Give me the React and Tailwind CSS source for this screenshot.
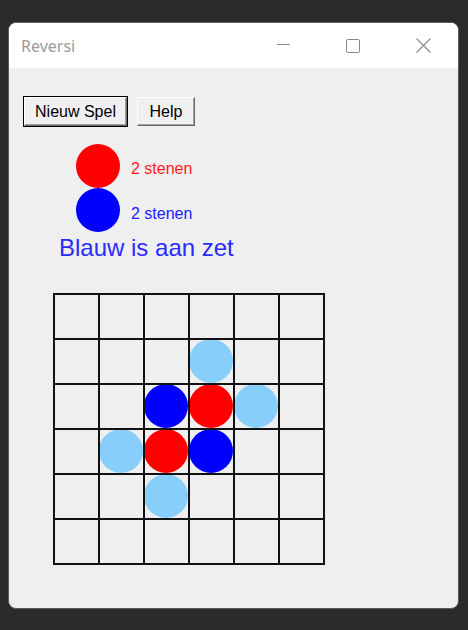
const stones = [
  { r: 1, c: 3, color: '#87cefa' },
  { r: 2, c: 2, color: '#0000ff' },
  { r: 2, c: 3, color: '#ff0000' },
  { r: 2, c: 4, color: '#87cefa' },
  { r: 3, c: 1, color: '#87cefa' },
  { r: 3, c: 2, color: '#ff0000' },
  { r: 3, c: 3, color: '#0000ff' },
  { r: 4, c: 2, color: '#87cefa' },
]

function Board() {
  const lines = [0, 1, 2, 3, 4, 5, 6]

  return (
    <svg width="272" height="272" viewBox="0 0 272 272" className="block">
      {stones.map((s) => (
        <circle key={`${s.r}-${s.c}`} cx={s.c * 45 + 23} cy={s.r * 45 + 23} r="22" fill={s.color} />
      ))}
      {lines.map((i) => (
        <g key={i}>
          <line x1={1 + i * 45} y1="0" x2={1 + i * 45} y2="272" stroke="#111" strokeWidth="2" />
          <line x1="0" y1={1 + i * 45} x2="272" y2={1 + i * 45} stroke="#111" strokeWidth="2" />
        </g>
      ))}
    </svg>
  )
}

function ClassicButton({ children, isDefault, className }) {
  return (
    <div className={`${isDefault ? 'border border-black' : 'border border-transparent'} ${className}`}>
      <button
        type="button"
        className="w-full h-full bg-[#f0f0f0] border-t border-l border-t-white border-l-white border-r border-b border-r-[#696969] border-b-[#696969] shadow-[inset_-1px_-1px_0_#a0a0a0] text-[16px] text-black leading-none"
        style={{ fontFamily: '"Liberation Sans", Arial, sans-serif' }}
      >
        {children}
      </button>
    </div>
  )
}

export default function App() {
  return (
    <div className="w-[468px] h-[630px] bg-[#2b2b2b] pt-[22px] pl-[8px]">
      <div className="w-[451px] h-[587px] rounded-[8px] border border-[#5c5c5c] overflow-hidden flex flex-col bg-[#efefef]">
        <div className="h-[45px] bg-white flex items-center shrink-0">
          <span
            className="ml-[12px] mt-[1px] text-[16px] text-[#9a9a9a]"
            style={{ fontFamily: '"Noto Sans", "Open Sans", sans-serif' }}
          >
            Reversi
          </span>
          <div className="ml-auto flex items-center h-full">
            <div className="w-[70px] h-full flex items-center justify-center">
              <div className="w-[13px] h-px bg-[#8a8a8a] mt-[-2px]" />
            </div>
            <div className="w-[70px] h-full flex items-center justify-center">
              <div className="w-[14px] h-[14px] border border-[#8a8a8a] rounded-[2px]" />
            </div>
            <div className="w-[70px] h-full flex items-center justify-center">
              <svg width="15" height="15" viewBox="0 0 15 15">
                <path d="M0.5 0.5 L14.5 14.5 M14.5 0.5 L0.5 14.5" stroke="#8a8a8a" strokeWidth="1.1" />
              </svg>
            </div>
          </div>
        </div>

        <div className="flex-1 pl-[14px] pt-[28px]" style={{ fontFamily: '"Liberation Sans", Arial, sans-serif' }}>
          <div className="flex gap-[8px]">
            <ClassicButton isDefault className="w-[105px] h-[31px]">Nieuw Spel</ClassicButton>
            <ClassicButton className="w-[60px] h-[31px]">Help</ClassicButton>
          </div>

          <div className="mt-[17px] ml-[53px] flex flex-col">
            <div className="flex items-center gap-[11px]">
              <div className="w-[44px] h-[44px] rounded-full bg-[#ff0000]" />
              <span className="text-[16px] text-[#ff1a1a] leading-none mt-[5px]">2 stenen</span>
            </div>
            <div className="flex items-center gap-[11px]">
              <div className="w-[44px] h-[44px] rounded-full bg-[#0000ff]" />
              <span className="text-[16px] text-[#2020ff] leading-none mt-[7px]">2 stenen</span>
            </div>
          </div>

          <div className="ml-[36px] mt-[4px] text-[24px] leading-[24px] text-[#2a2aff]">Blauw is aan zet</div>

          <div className="mt-[33px] ml-[30px]">
            <Board />
          </div>
        </div>
      </div>
    </div>
  )
}
